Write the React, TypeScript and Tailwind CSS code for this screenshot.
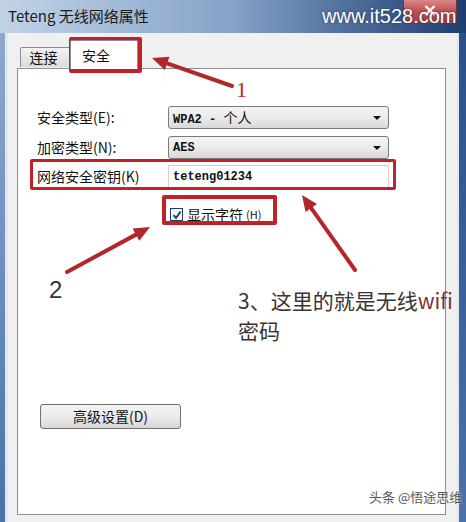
import React from "react";

const CJK = { fontFamily: '"Noto Sans CJK SC", "Noto Sans", sans-serif' };
const MONO = { fontFamily: '"Liberation Mono", "Noto Sans CJK SC", monospace' };

type Pt = [number, number];

// red annotation arrow, tail -> tip
function Arrow({ from, to }: { from: Pt; to: Pt }) {
  const dx = to[0] - from[0];
  const dy = to[1] - from[1];
  const len = Math.hypot(dx, dy);
  const ux = dx / len;
  const uy = dy / len;
  const bx = to[0] - ux * 16;
  const by = to[1] - uy * 16;
  const nx = -uy * 7;
  const ny = ux * 7;
  return (
    <g>
      <line x1={from[0]} y1={from[1]} x2={bx} y2={by} stroke="#b3262a" strokeWidth={4} strokeLinecap="round" />
      <polygon
        points={`${to[0]},${to[1]} ${bx + nx},${by + ny} ${bx - nx},${by - ny}`}
        fill="#b3262a"
      />
    </g>
  );
}

function Combo({ children }: { children: React.ReactNode }) {
  return (
    <div className="flex h-[23px] w-[221px] items-center justify-between rounded-[3px] border border-[#7a7a7a] bg-gradient-to-b from-[#f4f4f4] via-[#ebebeb] to-[#d9d9d9] pl-[4px] pr-[7px]">
      <span className="text-[12px] font-bold text-[#111]" style={MONO}>
        {children}
      </span>
      <span className="h-0 w-0 border-x-[4px] border-t-[4px] border-x-transparent border-t-[#111]" />
    </div>
  );
}

export default function App() {
  return (
    <div className="relative h-[522px] w-[466px] overflow-hidden bg-[#f0f0f0]" style={CJK}>
      {/* title bar */}
      <div className="flex h-[33px] items-start bg-gradient-to-r from-[#c2d3e8] via-[#86a2c8] to-[#1f3d70]">
        <div className="pl-[8px] pt-[5px] text-[15px] leading-[22px] text-[#1a1a1a]">Teteng 无线网络属性</div>
        <div className="relative ml-auto mr-[9px] flex h-[24px] w-[54px] items-start justify-center rounded-b-[4px] border border-t-0 border-[#6b3a3e] bg-gradient-to-b from-[#d9898a] via-[#c0504f] to-[#a8403f]">
          <svg className="mt-[5px]" width="12" height="11" viewBox="0 0 12 11">
            <path d="M1.5 1 L10.5 10 M10.5 1 L1.5 10" stroke="white" strokeWidth="2.4" />
          </svg>
        </div>
      </div>

      {/* frame + client */}
      <div className="flex h-[489px]">
        <div className="flex w-[8px]">
          <div className="w-[5px] bg-gradient-to-b from-[#8fa9cc] to-[#4b71ab]" />
          <div className="w-[3px] bg-[#dfe8f3]" />
        </div>

        <div className="flex flex-1 flex-col pl-[9px] pr-[11px] pt-[7px]">
          {/* tabs */}
          <div className="flex h-[28px] items-end pl-[3px]">
            <div className="mb-[1px] flex h-[20px] w-[51px] items-center justify-center rounded-t-[2px] border border-b-0 border-[#898c95] bg-gradient-to-b from-[#f3f3f3] to-[#dcdcdc] pr-[4px] text-[14px] text-[#111]">
              连接
            </div>
            <div className="relative z-10 -mb-[1px] -ml-[1px] flex h-[29px] w-[68px] items-start justify-start rounded-t-[2px] border border-b-0 border-[#898c95] bg-white pl-[11px] pt-[4px] text-[14px] text-[#111]">
              安全
            </div>
          </div>

          {/* panel */}
          <div className="flex h-[447px] flex-col border border-[#8e8f8f] bg-white">
            <div className="mt-[37px] flex items-center pl-[19px]">
              <span className="w-[131px] text-[14px] text-[#111]">安全类型(E):</span>
              <Combo>
                WPA2 - <span style={CJK} className="text-[14px] font-normal">个人</span>
              </Combo>
            </div>
            <div className="mt-[7px] flex items-center pl-[19px]">
              <span className="w-[131px] text-[14px] text-[#111]">加密类型(N):</span>
              <Combo>AES</Combo>
            </div>
            <div className="mt-[6px] flex items-center pl-[19px]">
              <span className="w-[131px] text-[14px] text-[#111]">网络安全密钥(K)</span>
              <div className="flex h-[23px] w-[221px] items-center border border-[#e3c9c9] bg-white pl-[4px]">
                <span className="text-[12px] font-bold text-[#111]" style={MONO}>
                  teteng01234
                </span>
              </div>
            </div>
            <div className="mt-[16px] flex items-center pl-[152px]">
              <span className="flex h-[13px] w-[13px] items-center justify-center border border-[#1c3f6e] bg-gradient-to-br from-[#e8f0fa] to-white">
                <svg width="10" height="10" viewBox="0 0 10 10">
                  <path d="M1.5 5.2 L4 8 L8.6 1.5" fill="none" stroke="#1f3a6b" strokeWidth="1.9" />
                </svg>
              </span>
              <span className="ml-[4px] text-[14px] text-[#111]">显示字符</span>
              <span className="ml-[3px] text-[11px] text-[#111]">(H)</span>
            </div>

            <div className="mt-[179px] pl-[22px]">
              <button className="flex h-[25px] w-[141px] items-center justify-center rounded-[3px] border border-[#707070] bg-gradient-to-b from-[#f3f3f3] via-[#ebebeb] to-[#d7d7d7] text-[14px] text-[#111]">
                高级设置(D)
              </button>
            </div>
          </div>
        </div>

        <div className="flex w-[9px]">
          <div className="w-[2px] bg-[#dfe8f3]" />
          <div className="w-[7px] bg-gradient-to-b from-[#2b4f88] to-[#4b71ab]" />
        </div>
      </div>

      {/* annotations */}
      <div className="pointer-events-none absolute left-[322px] top-[3px] text-[20px] leading-[26px] text-white [text-shadow:0_0_3px_rgba(20,40,80,0.8)]" style={{ fontFamily: '"Liberation Sans", Arial, sans-serif' }}>
        www.it528.com
      </div>
      <div className="pointer-events-none absolute left-[69px] top-[37px] h-[36px] w-[73px] rounded-[2px] border-[4px] border-[#c0222a]" />
      <div className="pointer-events-none absolute left-[30px] top-[159px] h-[31px] w-[366px] rounded-[2px] border-[3px] border-[#c0222a]" />
      <div className="pointer-events-none absolute left-[162px] top-[195px] h-[30px] w-[115px] rounded-[2px] border-[4px] border-[#c0222a]" />

      <svg className="pointer-events-none absolute left-0 top-0" width="466" height="522">
        <Arrow from={[232, 86]} to={[152, 58]} />
        <Arrow from={[67, 272]} to={[150, 227]} />
        <Arrow from={[355, 270]} to={[302, 195]} />
      </svg>

      <div className="pointer-events-none absolute left-[236px] top-[78px] text-[22px] leading-[24px] text-[#b3262a]" style={{ fontFamily: '"Liberation Serif", serif' }}>
        1
      </div>
      <div className="pointer-events-none absolute left-[49px] top-[277px] text-[24px] leading-[26px] text-[#333]" style={{ fontFamily: '"Liberation Sans", sans-serif' }}>
        2
      </div>
      <div className="pointer-events-none absolute left-[238px] top-[285px] text-[21px] leading-[30px] text-[#3a3434]">
        <div>
          3、这里的就是无线<span className="text-[#7a3434]">wifi</span>
        </div>
        <div>密码</div>
      </div>
      <div className="pointer-events-none absolute left-[369px] top-[488px] text-[13px] leading-[18px] text-[#555] [text-shadow:0_0_2px_white]">
        头条 @悟途思维
      </div>
    </div>
  );
}
